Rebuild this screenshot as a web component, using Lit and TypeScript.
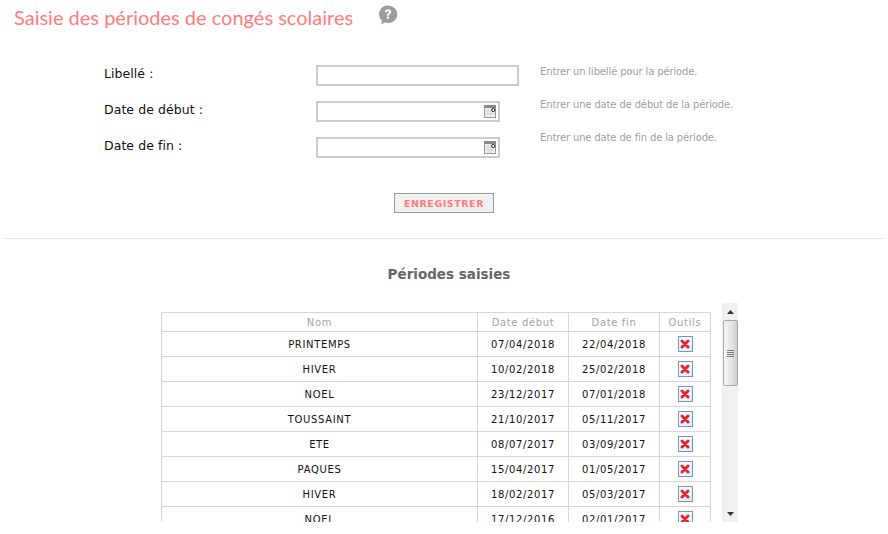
import { LitElement, html, css, svg } from "lit";
import { customElement } from "lit/decorators.js";

const ROWS = [
  ["PRINTEMPS", "07/04/2018", "22/04/2018"],
  ["HIVER", "10/02/2018", "25/02/2018"],
  ["NOEL", "23/12/2017", "07/01/2018"],
  ["TOUSSAINT", "21/10/2017", "05/11/2017"],
  ["ETE", "08/07/2017", "03/09/2017"],
  ["PAQUES", "15/04/2017", "01/05/2017"],
  ["HIVER", "18/02/2017", "05/03/2017"],
  ["NOEL", "17/12/2016", "02/01/2017"],
];

const calendar = svg`<svg class="cal" width="12" height="13" viewBox="0 0 12 13">
  <rect x="0.5" y="0.5" width="11" height="12" fill="#f2f2f2" stroke="#999"/>
  <rect x="0" y="0" width="12" height="3" fill="#8a8a8a"/>
  <path d="M1 6h10M1 9h10M4 3v9M7 3v9" stroke="#d4d4d4" fill="none"/>
  <circle cx="9.3" cy="5" r="1.6" fill="#fff" stroke="#222"/>
</svg>`;

const help = svg`<svg width="20" height="20" viewBox="0 0 20 20">
  <path d="M10 .5a9.3 8.8 0 0 1 0 17.6c-1.2 0-2.3-.2-3.3-.5L3.2 19.6l.6-3.9A8.8 8.8 0 0 1 10 .5z" fill="#9c9c9c"/>
  <path d="M6.9 7.2c.1-1.9 1.4-2.9 3.2-2.9 1.9 0 3.1 1 3.1 2.6 0 1.2-.7 1.8-1.500 2.300-.7.500-.9.800-.9 1.500H8.900c0-1.300.4-1.900 1.300-2.500.7-.500 1-.800 1-1.200 0-.6-.4-.9-1.100-.9-.7 0-1.200.4-1.300 1.100z" fill="#fff"/>
  <rect x="8.800" y="11.500" width="2.100" height="2.100" fill="#fff"/>
</svg>`;

const cross = svg`<svg width="10" height="10" viewBox="0 0 10 10">
  <path d="M2 2 8 8M8 2 2 8" stroke="#e4222c" stroke-width="2.900" stroke-linecap="round"/>
</svg>`;

@customElement("app-root")
export class AppRoot extends LitElement {
  static styles = css`
    :host {
      display: block;
      width: 888px;
      height: 534px;
      overflow: hidden;
      background: #fff;
      font-family: "DejaVu Sans", Verdana, sans-serif;
      color: #111;
    }
    .head {
      display: flex;
      align-items: flex-start;
      padding: 4px 0 0 14px;
      height: 50px;
      box-sizing: border-box;
    }
    h1 {
      margin: 0;
      font: 400 20px/26px Lato, sans-serif;
      color: #ff7b7b;
    }
    .help {
      margin-left: 25px;
      margin-top: 1px;
      height: 20px;
    }
    .form {
      display: flex;
      padding-left: 104px;
      height: 122px;
      box-sizing: border-box;
      padding-top: 15px;
    }
    .fields {
      display: grid;
      grid-template-columns: 212px 203px;
      grid-auto-rows: 21px;
      row-gap: 15px;
      align-items: start;
    }
    label {
      font-size: 12.5px;
      line-height: 17px;
      letter-spacing: 0.06px;
    }
    .field {
      box-sizing: border-box;
      height: 21px;
      width: 203px;
      border: 2px solid #ccc;
      background: #fff;
      display: flex;
      align-items: center;
      justify-content: flex-end;
      padding-right: 2px;
    }
    .field.date {
      width: 184px;
    }
    .cal {
      display: block;
    }
    .hints {
      margin-left: 21px;
      display: flex;
      flex-direction: column;
      gap: 17px;
      margin-top: -1px;
      font-size: 10px;
      line-height: 16px;
      letter-spacing: -0.14px;
      color: #a0a0a0;
    }
    .actions {
      display: flex;
      justify-content: center;
    }
    button {
      box-sizing: border-box;
      width: 100px;
      height: 20px;
      padding: 1px 0 0;
      margin: 21px 0 0 0;
      border: 1px solid #999;
      background: #f0f0f0;
      font: 700 9.500px/18px "DejaVu Sans", sans-serif;
      letter-spacing: 0.55px;
      color: #ff7b7b;
    }
    hr {
      margin: 25px 3px 0;
      border: 0;
      height: 1px;
      background: #e8e8e8;
    }
    h2 {
      margin: 26px 0 0;
      font-size: 13.500px;
      line-height: 18px;
      font-weight: 700;
      text-align: center;
      color: #666;
      padding-left: 10px;
    }
    .panel {
      display: flex;
      margin: 20px 0 0 161px;
      height: 219px;
      width: 577px;
      justify-content: space-between;
    }
    .scroller {
      height: 219px;
      overflow: hidden;
      padding-top: 9px;
      box-sizing: border-box;
      width: 551px;
    }
    table {
      border-collapse: collapse;
      table-layout: fixed;
      width: 549px;
      font-size: 10px;
      letter-spacing: 0.65px;
    }
    th, td {
      border: 1px solid #d6d6d6;
      text-align: center;
      padding: 0;
      box-sizing: border-box;
    }
    th {
      height: 19px;
      font-weight: 400;
      color: #a3a3a3;
    }
    td {
      height: 25px;
      color: #111;
    }
    .del {
      display: inline-flex;
      align-items: center;
      justify-content: center;
      vertical-align: middle;
      box-sizing: border-box;
      width: 15px;
      height: 16px;
      border: 1px solid #6b9acb;
      background: linear-gradient(135deg, #fff, #dcebf8);
    }
    .bar {
      width: 16px;
      height: 219px;
      background: #f0f0f0;
      display: flex;
      flex-direction: column;
      align-items: center;
      box-sizing: border-box;
    }
    .arrow {
      height: 17px;
      width: 16px;
      flex: none;
      display: flex;
      align-items: center;
      justify-content: center;
    }
    .thumb {
      box-sizing: border-box;
      width: 15px;
      height: 66px;
      border: 1px solid #a8a8a8;
      border-radius: 2px;
      background: linear-gradient(90deg, #f6f6f6, #e6e6e6 55%, #cfcfcf);
      display: flex;
      flex-direction: column;
      align-items: center;
      justify-content: center;
      gap: 1px;
    }
    .thumb i {
      display: block;
      width: 7px;
      height: 1px;
      background: #777;
    }
    .spacer {
      flex: 1;
    }
  `;

  render() {
    return html`
      <div class="head">
        <h1>Saisie des périodes de congés scolaires</h1>
        <span class="help">${help}</span>
      </div>
      <div class="form">
        <div class="fields">
          <label>Libellé :</label>
          <div class="field"></div>
          <label>Date de début :</label>
          <div class="field date">${calendar}</div>
          <label>Date de fin :</label>
          <div class="field date">${calendar}</div>
        </div>
        <div class="hints">
          <span>Entrer un libellé pour la période.</span>
          <span>Entrer une date de début de la période.</span>
          <span>Entrer une date de fin de la période.</span>
        </div>
      </div>
      <div class="actions"><button>ENREGISTRER</button></div>
      <hr />
      <h2>Périodes saisies</h2>
      <div class="panel">
        <div class="scroller">
          <table>
            <colgroup>
              <col style="width:316px" /><col style="width:91px" /><col style="width:91px" /><col style="width:51px" />
            </colgroup>
            <thead>
              <tr><th>Nom</th><th>Date début</th><th>Date fin</th><th>Outils</th></tr>
            </thead>
            <tbody>
              ${ROWS.map(
                (r) => html`<tr>
                  <td>${r[0]}</td><td>${r[1]}</td><td>${r[2]}</td>
                  <td><span class="del">${cross}</span></td>
                </tr>`
              )}
            </tbody>
          </table>
        </div>
        <div class="bar">
          <div class="arrow"><svg width="7" height="4" viewBox="0 0 7 4"><path d="M3.500 0 7 4H0z" fill="#333"/></svg></div>
          <div class="thumb"><i></i><i></i><i></i><i></i></div>
          <div class="spacer"></div>
          <div class="arrow"><svg width="7" height="4" viewBox="0 0 7 4"><path d="M0 0h7L3.500 4z" fill="#333"/></svg></div>
        </div>
      </div>
    `;
  }
}
